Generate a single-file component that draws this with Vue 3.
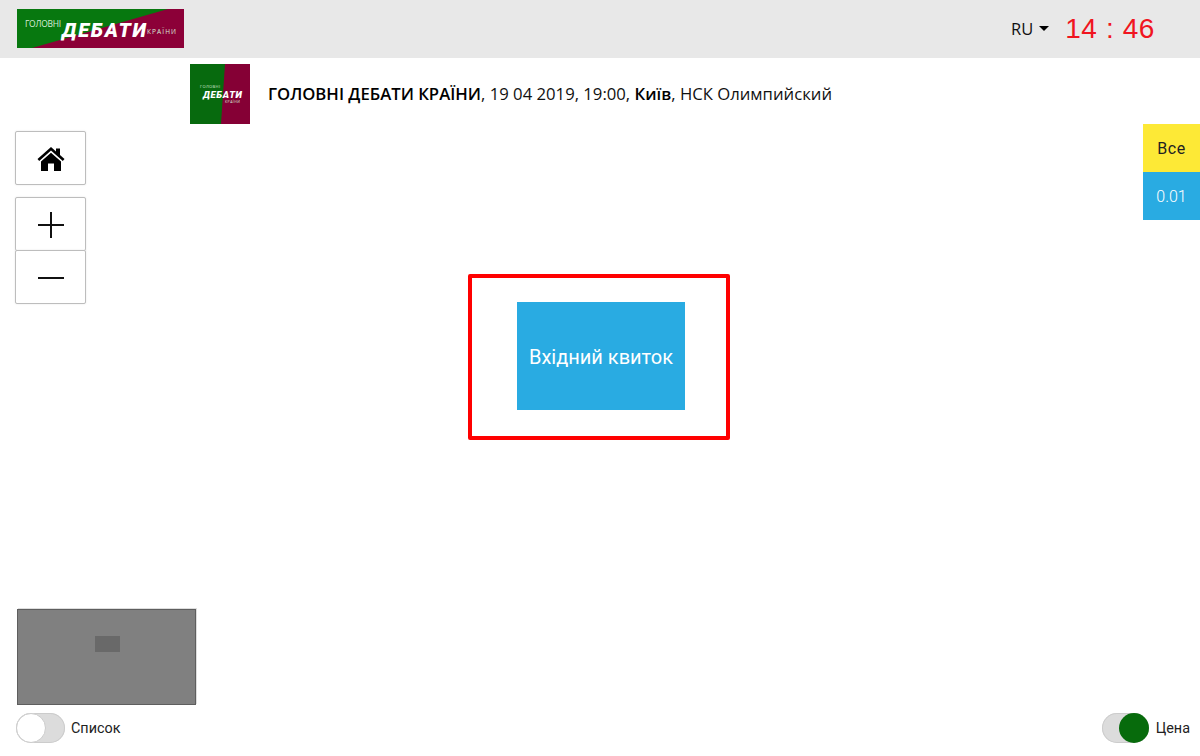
<template>
  <div class="page">
    <header class="topbar">
      <svg class="logo-wide" viewBox="0 0 167 39" width="167" height="39">
        <rect width="167" height="39" fill="#07780f" />
        <polygon points="151,0 167,0 167,39 15,39" fill="#8c0038" />
        <text x="8" y="18" class="logo-thin" font-size="8.5" textLength="36">ГОЛОВНІ</text>
        <text x="45" y="28" class="logo-bold" font-size="20" textLength="84">ДЕБАТИ</text>
        <text x="130" y="25" class="logo-thin" font-size="6.5" textLength="29">КРАЇНИ</text>
      </svg>
      <div class="topbar-right">
        <span class="lang">RU<i class="caret"></i></span>
        <span class="clock">14 : 46</span>
      </div>
    </header>

    <div class="event-row">
      <svg class="logo-square" viewBox="0 0 60 60" width="60" height="60">
        <rect width="60" height="60" fill="#076a0e" />
        <polygon points="35,0 60,0 60,60 31,60" fill="#850035" />
        <text x="10" y="24" class="logo-thin" font-size="4" textLength="20">ГОЛОВНІ</text>
        <text x="13" y="34" class="logo-bold" font-size="9.5" textLength="39">ДЕБАТИ</text>
        <text x="35" y="39" class="logo-thin" font-size="3.5" textLength="15">КРАЇНИ</text>
      </svg>
      <p class="event-text">
        <b>ГОЛОВНІ ДЕБАТИ КРАЇНИ</b>, 19 04 2019, 19:00, <b>Київ</b>, НСК Олимпийский
      </p>
    </div>

    <main class="canvas">
      <div class="zoom-tools">
        <button class="tool home">
          <svg viewBox="1 1 28 25" width="28" height="25">
            <path d="M15 2 L1.5 14 L3.2 16 L15 5.6 L26.8 16 L28.5 14 L24 10 V3.5 H20 V6.5 Z" fill="#000" />
            <path d="M15 7.8 L5 16.6 V26 H12 V18.5 H18 V26 H25 V16.6 Z" fill="#000" />
          </svg>
        </button>
        <div class="zoom-group">
          <button class="tool">
            <svg viewBox="0 0 28 28" width="28" height="28">
              <path d="M14 1 V27 M1 14 H27" stroke="#111" stroke-width="2" />
            </svg>
          </button>
          <button class="tool">
            <svg viewBox="0 0 28 28" width="28" height="28">
              <path d="M1 14 H27" stroke="#111" stroke-width="2" />
            </svg>
          </button>
        </div>
      </div>

      <div class="legend">
        <div class="legend-all">Все</div>
        <div class="legend-price">0.01</div>
      </div>

      <div class="zone-frame">
        <div class="zone">Вхідний квиток</div>
      </div>

      <div class="minimap">
        <div class="minimap-view"></div>
      </div>

      <label class="switch switch-left">
        <span class="track"><span class="knob"></span></span>
        <span>Список</span>
      </label>
      <label class="switch switch-right">
        <span class="track on"><span class="knob"></span></span>
        <span>Цена</span>
      </label>
    </main>
  </div>
</template>

<script setup>
</script>

<style>
html,
body {
  margin: 0;
  background: #fff;
}
</style>

<style scoped>
.page {
  width: 1200px;
  height: 756px;
  display: flex;
  flex-direction: column;
  overflow: hidden;
  font-family: "Open Sans", "Liberation Sans", sans-serif;
  color: #000;
}

.topbar {
  flex: 0 0 58px;
  display: flex;
  align-items: center;
  justify-content: space-between;
  padding: 0 45px 1px 17px;
  box-sizing: border-box;
  background: #e8e8e8;
}

.logo-wide {
  display: block;
}

.logo-thin {
  fill: #d8ecd8;
  font-family: "Open Sans", sans-serif;
}

.logo-bold {
  fill: #fff;
  font-family: Roboto, sans-serif;
  font-weight: 900;
  font-style: italic;
}

.topbar-right {
  display: flex;
  align-items: center;
  gap: 16px;
}

.lang {
  display: flex;
  align-items: center;
  gap: 6px;
  font-size: 16.5px;
  color: #111;
}

.caret {
  width: 0;
  height: 0;
  border-left: 5px solid transparent;
  border-right: 5px solid transparent;
  border-top: 5px solid #000;
}

.clock {
  font-family: "Liberation Sans", sans-serif;
  font-size: 28px;
  letter-spacing: 0.6px;
  color: #f01520;
}

.event-row {
  flex: 0 0 auto;
  display: flex;
  align-items: center;
  gap: 18px;
  padding: 6px 0 0 190px;
}

.event-text {
  margin: -2px 0 0;
  font-size: 16.7px;
  color: #111;
}

.event-text b {
  font-weight: 600;
  color: #000;
}

.canvas {
  position: relative;
  flex: 1;
}

.zoom-tools {
  position: absolute;
  left: 15px;
  top: 7px;
  display: flex;
  flex-direction: column;
  gap: 12px;
}

.tool {
  display: flex;
  align-items: center;
  justify-content: center;
  width: 71px;
  height: 54px;
  padding: 0;
  box-sizing: border-box;
  background: #fff;
  border: 1px solid #bdbdbd;
  border-radius: 2px;
  box-shadow: 0 0 2px #e4e4e4;
}

.zoom-group .tool svg {
  margin-top: 2px;
}

.zoom-group .tool + .tool {
  margin-top: -1px;
}

.legend {
  position: absolute;
  right: 0;
  top: 0;
  width: 57px;
  font-family: Roboto, sans-serif;
  font-size: 16px;
  text-align: center;
}

.legend-all,
.legend-price {
  display: flex;
  align-items: center;
  justify-content: center;
  height: 48px;
}

.legend-all {
  background: #fde936;
  color: #222;
  letter-spacing: 0.5px;
}

.legend-price {
  background: #29abe2;
  color: #fff;
  font-weight: 300;
}

.zone-frame {
  position: absolute;
  left: 468px;
  top: 150px;
  width: 262px;
  height: 166px;
  box-sizing: border-box;
  display: flex;
  align-items: center;
  justify-content: center;
  border: 4px solid #ff0000;
  border-radius: 2px;
}

.zone {
  display: flex;
  align-items: center;
  justify-content: center;
  width: 168px;
  height: 108px;
  margin: -3px 0 0 4px;
  padding-top: 2px;
  box-sizing: border-box;
  background: #29abe2;
  color: #fff;
  font-family: Roboto, sans-serif;
  font-size: 20px;
  font-weight: 400;
}

.minimap {
  position: absolute;
  left: 17px;
  top: 485px;
  width: 179px;
  height: 96px;
  box-sizing: border-box;
  background: #808080;
  border: 1px solid #5e5e5e;
  box-shadow: 1px -1px 0 #ddd;
}

.minimap-view {
  width: 25px;
  height: 16px;
  margin: 26px 0 0 77px;
  background: #696969;
}

.switch {
  position: absolute;
  top: 589px;
  display: flex;
  align-items: center;
  gap: 6px;
  font-family: Roboto, sans-serif;
  font-size: 14.4px;
  color: #222;
}

.switch-left {
  left: 16px;
}

.switch-right {
  right: 10px;
  gap: 7px;
}

.track {
  position: relative;
  display: block;
  width: 49px;
  height: 30px;
  border-radius: 15px;
  background: #dcdcdc;
  box-shadow: inset 0 0 0 1px #ccc;
}

.switch-right .track {
  width: 47px;
}

.knob {
  position: absolute;
  left: 0;
  top: 0;
  width: 30px;
  height: 30px;
  box-sizing: border-box;
  border-radius: 50%;
  background: #fff;
  border: 1px solid #ccc;
}

.track.on .knob {
  left: 17px;
  background: #076b0c;
  border: none;
}
</style>
